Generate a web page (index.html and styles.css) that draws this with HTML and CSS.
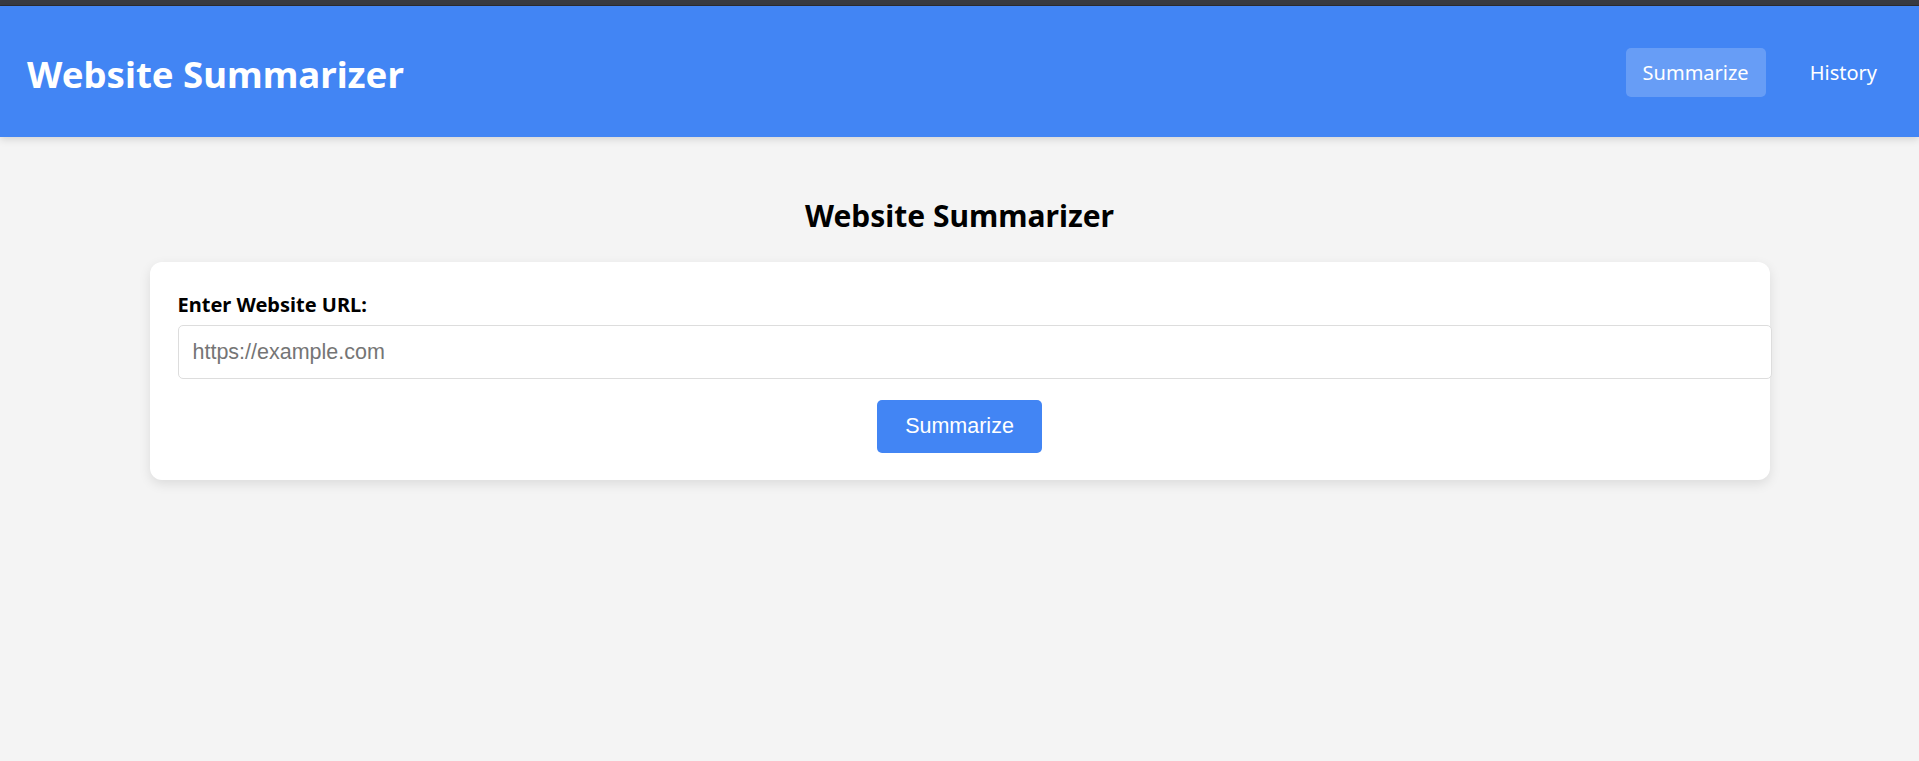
FILE: index.html
```html
<!DOCTYPE html>
<html lang="en">
<head>
<meta charset="utf-8">
<title>Website Summarizer</title>
<link rel="stylesheet" href="styles.css">
</head>
<body>
<div class="chrome-bar"></div>
<header class="site-header">
  <h1 class="brand">Website Summarizer</h1>
  <nav class="nav">
    <a class="nav-link active" href="#">Summarize</a>
    <a class="nav-link" href="#">History</a>
  </nav>
</header>
<main class="main">
  <h2 class="page-title">Website Summarizer</h2>
  <section class="card">
    <label class="field-label" for="url">Enter Website URL:</label>
    <input class="url-input" id="url" type="text" placeholder="https://example.com">
    <div class="actions">
      <button class="btn" type="button">Summarize</button>
    </div>
  </section>
</main>
</body>
</html>
```
FILE: styles.css
```css
* { box-sizing: content-box; }
html, body { margin: 0; padding: 0; }
body {
  background: #f4f4f4;
  font-family: "Noto Sans", "Open Sans", sans-serif;
  color: #000;
  min-height: 761px;
}
.chrome-bar {
  height: 5px;
  background: #393b41;
  border-bottom: 1px solid #2c2d31;
}
.site-header {
  background: #4285f4;
  height: 131px;
  padding: 0 25px 0 27px;
  display: flex;
  align-items: center;
  justify-content: space-between;
  box-shadow: 0 2px 8px rgba(0,0,0,0.15);
  position: relative;
}
.brand {
  margin: 0;
  padding-top: 6px;
  color: #fff;
  font-size: 36.6px;
  font-weight: 700;
  line-height: 1.2;
}
.nav { display: flex; gap: 27px; align-items: center; margin-top: 2px; }
.nav-link {
  color: #fff;
  text-decoration: none;
  font-size: 20px;
  height: 49px;
  line-height: 49px;
  padding: 0 17px;
  border-radius: 5px;
}
.nav-link.active { background: rgba(255,255,255,0.2); }
.main { padding: 0 0 40px; }
.page-title {
  text-align: center;
  font-size: 30px;
  font-weight: 700;
  line-height: 36px;
  margin: 61px 0 28px;
}
.card {
  width: 1564px;
  margin: 0 auto;
  background: #fff;
  border-radius: 12px;
  padding: 30px 28px 27px;
  box-shadow: 0 4px 12px rgba(0,0,0,0.1);
}
.field-label {
  display: block;
  font-size: 20px;
  font-weight: 700;
  line-height: 26px;
  margin-bottom: 7px;
}
.url-input {
  display: block;
  width: 100%;
  padding: 14px 14px;
  border: 1px solid #ddd;
  border-radius: 5px;
  font-family: "Liberation Sans", Arial, sans-serif;
  font-size: 21.5px;
  line-height: 24px;
  color: #000;
  outline: none;
  margin: 0;
}
.url-input::placeholder { color: #757575; }
.actions { display: flex; justify-content: center; margin-top: 21px; }
.btn {
  background: #4285f4;
  color: #fff;
  border: none;
  border-radius: 5px;
  font-family: "Liberation Sans", Arial, sans-serif;
  font-size: 21.5px;
  line-height: 25px;
  padding: 14px 28px;
  cursor: pointer;
}
```
